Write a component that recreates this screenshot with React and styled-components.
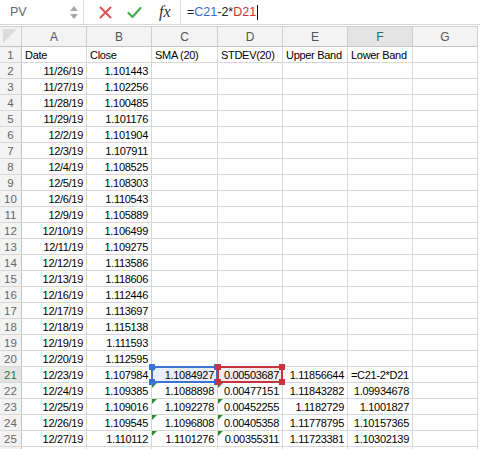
import React from "react";
import styled, { createGlobalStyle, css } from "styled-components";

const Global = createGlobalStyle`
  html, body { margin: 0; padding: 0; background: #fff; }
  body { font-family: "Liberation Sans", Arial, sans-serif; overflow: hidden; }
`;

const Page = styled.div`
  width: 480px;
  height: 449px;
  overflow: hidden;
  background: #fff;
`;

const TopBar = styled.div`
  display: flex;
  align-items: center;
  height: 24px;
  border-bottom: 1px solid #d6d6d6;
  margin-bottom: 1px;
`;

const NameBox = styled.div`
  width: 84px;
  height: 24px;
  box-sizing: border-box;
  border-right: 1px solid #dcdcdc;
  display: flex;
  align-items: center;
  justify-content: space-between;
  padding: 0 4px 0 10px;
  color: #666;
  font-size: 12.5px;
`;

const Spinner = styled.div`
  display: flex;
  flex-direction: column;
  gap: 3px;
  margin-right: 1px;
`;

const IconGroup = styled.div`
  width: 97px;
  height: 24px;
  box-sizing: border-box;
  border-right: 1px solid #dcdcdc;
  display: flex;
  align-items: center;
  padding-left: 15px;
  gap: 15px;
`;

const Fx = styled.span`
  font-family: "Liberation Serif", "Times New Roman", serif;
  font-style: italic;
  font-size: 16px;
  color: #333;
  margin-left: 2px;
`;

const Formula = styled.div`
  padding-left: 6px;
  font-size: 12.5px;
  display: flex;
  align-items: center;
  color: #222;
`;

const Ref = styled.span`
  color: ${(p) => p.$c};
`;

const Caret = styled.span`
  display: inline-block;
  width: 1px;
  height: 15px;
  background: #111;
  margin-left: 1px;
`;

const Grid = styled.div`
  display: grid;
  grid-template-columns: 22px 65px 65px 66px 65px 65px 65px 65px;
  grid-template-rows: 20px;
  grid-auto-rows: 16px;
  width: 478px;
  border-top: 1px solid #d0d0d0;
`;

const ColHeader = styled.div`
  box-sizing: border-box;
  background: ${(p) => (p.$active ? "#e4e4e4" : "#f3f3f3")};
  border-right: 1px solid #cfcfcf;
  border-bottom: 1px solid #c4c4c4;
  display: flex;
  align-items: center;
  justify-content: center;
  font-size: 12px;
  color: ${(p) => (p.$active ? "#217346" : "#555")};
  position: relative;
`;

const Corner = styled(ColHeader)`
  &::after {
    content: "";
    position: absolute;
    left: 3px;
    top: 2px;
    width: 0;
    height: 0;
    border-top: 14px solid #dcdcdc;
    border-right: 14px solid transparent;
  }
`;

const RowNum = styled.div`
  box-sizing: border-box;
  background: ${(p) => (p.$active ? "#e4e4e4" : "#f3f3f3")};
  border-right: 1px solid #c4c4c4;
  border-bottom: 1px solid #d8d8d8;
  display: flex;
  align-items: center;
  justify-content: center;
  font-size: 11.5px;
  color: ${(p) => (p.$active ? "#217346" : "#666")};
`;

const selStyles = {
  blue: css`
    background: #e9eefa;
    &::before {
      content: "";
      position: absolute;
      inset: -1px -1px -1px -1px;
      border: 2px solid #3b72d6;
      pointer-events: none;
      z-index: 2;
    }
  `,
  red: css`
    background: #f9e9ea;
    &::before {
      content: "";
      position: absolute;
      inset: -1px -1px -1px -1px;
      border: 2px solid #c7343f;
      pointer-events: none;
      z-index: 2;
    }
  `,
};

const Cell = styled.div`
  position: relative;
  box-sizing: border-box;
  border-right: 1px solid #d8d8d8;
  border-bottom: 1px solid #d8d8d8;
  display: flex;
  align-items: center;
  justify-content: ${(p) => (p.$right ? "flex-end" : "flex-start")};
  padding: 0 3px 0 3px;
  font-size: 11px;
  letter-spacing: -0.3px;
  color: #000;
  white-space: nowrap;
  overflow: visible;
  ${(p) => p.$sel && selStyles[p.$sel]}
`;

const Tri = styled.span`
  position: absolute;
  left: 0;
  top: 0;
  width: 0;
  height: 0;
  border-top: 5px solid #2e8b2e;
  border-right: 5px solid transparent;
  z-index: 1;
`;

const Handle = styled.span`
  position: absolute;
  width: 6px;
  height: 6px;
  background: ${(p) => p.$c};
  z-index: 3;
  ${(p) => (p.$top ? "top: -3px;" : "bottom: -3px;")}
  ${(p) => (p.$left ? "left: -3px;" : "right: -3px;")}
`;

const Text = styled.span`
  position: relative;
  z-index: 2;
`;

const columns = ["A", "B", "C", "D", "E", "F", "G"];

const data = [
  ["11/26/19", "1.101443"],
  ["11/27/19", "1.102256"],
  ["11/28/19", "1.100485"],
  ["11/29/19", "1.101176"],
  ["12/2/19", "1.101904"],
  ["12/3/19", "1.107911"],
  ["12/4/19", "1.108525"],
  ["12/5/19", "1.108303"],
  ["12/6/19", "1.110543"],
  ["12/9/19", "1.105889"],
  ["12/10/19", "1.106499"],
  ["12/11/19", "1.109275"],
  ["12/12/19", "1.113586"],
  ["12/13/19", "1.118606"],
  ["12/16/19", "1.112446"],
  ["12/17/19", "1.113697"],
  ["12/18/19", "1.115138"],
  ["12/19/19", "1.111593"],
  ["12/20/19", "1.112595"],
  ["12/23/19", "1.107984", "1.1084927", "0.00503687", "1.11856644", "=C21-2*D21"],
  ["12/24/19", "1.109385", "1.1088898", "0.00477151", "1.11843282", "1.09934678"],
  ["12/25/19", "1.109016", "1.1092278", "0.00452255", "1.1182729", "1.1001827"],
  ["12/26/19", "1.109545", "1.1096808", "0.00405358", "1.11778795", "1.10157365"],
  ["12/27/19", "1.110112", "1.1101276", "0.00355311", "1.11723381", "1.10302139"],
];

const headers = ["Date", "Close", "SMA (20)", "STDEV(20)", "Upper Band", "Lower Band", ""];

const Handles = ({ c }) => (
  <>
    <Handle $c={c} $top $left />
    <Handle $c={c} $top />
    <Handle $c={c} $left />
    <Handle $c={c} />
  </>
);

export default function App() {
  return (
    <Page>
      <Global />
      <TopBar>
        <NameBox>
          <span>PV</span>
          <Spinner>
            <svg width="8" height="5" viewBox="0 0 8 5"><path d="M4 0 L8 5 L0 5 Z" fill="#a8a8a8" /></svg>
            <svg width="8" height="5" viewBox="0 0 8 5"><path d="M0 0 L8 0 L4 5 Z" fill="#a8a8a8" /></svg>
          </Spinner>
        </NameBox>
        <IconGroup>
          <svg width="13" height="13" viewBox="0 0 13 13">
            <path d="M1.5 1.5 L11.5 11.5 M11.5 1.5 L1.5 11.5" stroke="#e0524f" strokeWidth="2" strokeLinecap="round" />
          </svg>
          <svg width="15" height="13" viewBox="0 0 15 13">
            <path d="M1.5 7 L5.5 11 L13.5 2" stroke="#4caa4f" strokeWidth="2.2" fill="none" strokeLinecap="round" strokeLinejoin="round" />
          </svg>
          <Fx>fx</Fx>
        </IconGroup>
        <Formula>
          =<Ref $c="#2f6fd6">C21</Ref>-2*<Ref $c="#c7343f">D21</Ref>
          <Caret />
        </Formula>
      </TopBar>
      <Grid>
        <Corner />
        {columns.map((c) => (
          <ColHeader key={c} $active={c === "F"}>{c}</ColHeader>
        ))}
        <RowNum>1</RowNum>
        {headers.map((h, i) => (
          <Cell key={i}>{h}</Cell>
        ))}
        {data.map((row, ri) => {
          const rn = ri + 2;
          const cells = [];
          for (let ci = 0; ci < 7; ci++) {
            const v = row[ci] || "";
            const isC = ci === 2;
            const isD = ci === 3;
            const sel = rn === 21 && isC ? "blue" : rn === 21 && isD ? "red" : undefined;
            const tri = rn >= 21 && rn <= 25 && (isC || (isD && rn !== 21));
            const right = !v.startsWith("=");
            cells.push(
              <Cell key={ci} $right={right} $sel={sel}>
                {tri && <Tri />}
                {sel === "blue" && <Handles c="#3b72d6" />}
                {sel === "red" && <Handles c="#c7343f" />}
                <Text>{v}</Text>
              </Cell>
            );
          }
          return (
            <React.Fragment key={rn}>
              <RowNum $active={rn === 21}>{rn}</RowNum>
              {cells}
            </React.Fragment>
          );
        })}
        <RowNum />
        {columns.map((c) => (
          <Cell key={"e" + c} />
        ))}
      </Grid>
    </Page>
  );
}
